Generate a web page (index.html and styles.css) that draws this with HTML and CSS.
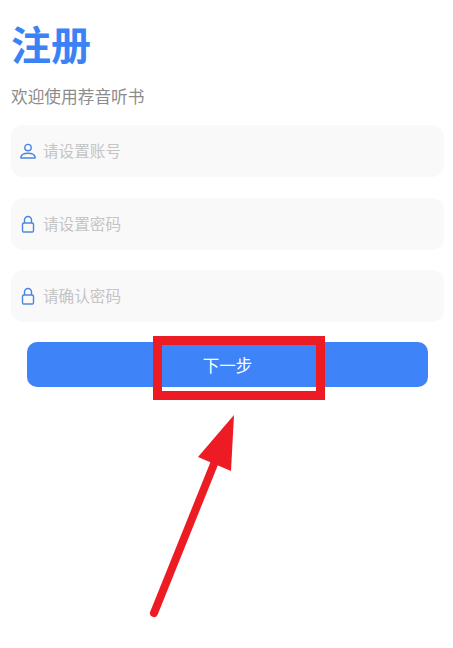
FILE: index.html
```html
<!DOCTYPE html>
<html lang="zh-CN">
<head>
    <meta charset="UTF-8">
    <meta name="viewport" content="width=device-width, initial-scale=1.0">
    <title>注册</title>
    <link rel="stylesheet" href="styles.css">
</head>
<body>
    <div class="register">
        <h1 class="title">注册</h1>
        <p class="welcome">欢迎使用荐音听书</p>

        <div class="field">
            <svg class="fieldIcon" viewBox="0 0 16 16" width="16" height="16">
                <circle cx="8" cy="4.6" r="3.2"/>
                <path d="M1.3 15h13.4c.4 0 .6-.3.5-.7-.5-2.600-3-4-7.200-4s-6.700 1.400-7.200 4c-.1.4.1.7.5.7z"/>
            </svg>
            <span class="placeholder">请设置账号</span>
        </div>
        <div class="field">
            <svg class="fieldIcon" viewBox="0 0 16 18" width="16" height="18">
                <path d="M4.500 8V5a3.500 3.500 0 0 1 7 0V8"/>
                <rect x="2.500" y="8" width="11" height="9" rx="1.200"/>
            </svg>
            <span class="placeholder">请设置密码</span>
        </div>
        <div class="field">
            <svg class="fieldIcon" viewBox="0 0 16 18" width="16" height="18">
                <path d="M4.500 8V5a3.500 3.500 0 0 1 7 0V8"/>
                <rect x="2.500" y="8" width="11" height="9" rx="1.200"/>
            </svg>
            <span class="placeholder">请确认密码</span>
        </div>

        <button class="nextBtn">下一步</button>
    </div>

    <!-- red annotation drawn over the page -->
    <div class="highlight"></div>
    <svg class="arrow" viewBox="0 0 453 648" width="453" height="648">
        <line x1="154" y1="613" x2="214" y2="464"/>
        <polygon points="234,415 198,457 231,471"/>
    </svg>
</body>
</html>
```

FILE: styles.css
```css
* {
    box-sizing: border-box;
}
html, body {
    margin: 0;
    height: 100%;
    background-color: #fff;
    font-family: "Noto Sans CJK SC", "Liberation Sans", sans-serif;
}
body {
    position: relative;
    overflow: hidden;
}
.register {
    padding: 14px 9px 0 11px;
}
.title {
    margin: 0;
    height: 58px;
    line-height: 58px;
    font-size: 40px;
    font-weight: 700;
    color: #3b82f6;
}
.welcome {
    margin: 12px 0 0;
    height: 24px;
    line-height: 24px;
    font-size: 16.700px;
    color: #8c8c8c;
}
.field {
    display: flex;
    align-items: center;
    height: 52px;
    margin-top: 20px;
    padding-left: 9px;
    background-color: #f9f9f9;
    border-radius: 12px;
}
.welcome + .field {
    margin-top: 17px;
}
.welcome + .field + .field {
    margin-top: 21px;
}
.fieldIcon {
    flex: none;
    fill: none;
    stroke: #4a86e0;
    stroke-width: 1.400;
}
.placeholder {
    margin: 0 0 2px 7px;
    font-size: 15.600px;
    color: #c4c4c4;
}
.nextBtn {
    display: block;
    width: 401px;
    height: 45px;
    margin: 20px 0 0 16px;
    border: none;
    border-radius: 10px;
    background-color: #3f83f8;
    color: #fff;
    font-family: inherit;
    font-size: 16.500px;
}
.highlight {
    position: absolute;
    left: 153px;
    top: 336px;
    width: 172px;
    height: 64px;
    border: 9px solid #ed1c24;
}
.arrow {
    position: absolute;
    left: 0;
    top: 0;
}
.arrow line {
    stroke: #ed1c24;
    stroke-width: 8;
    stroke-linecap: round;
}
.arrow polygon {
    fill: #ed1c24;
}
```
